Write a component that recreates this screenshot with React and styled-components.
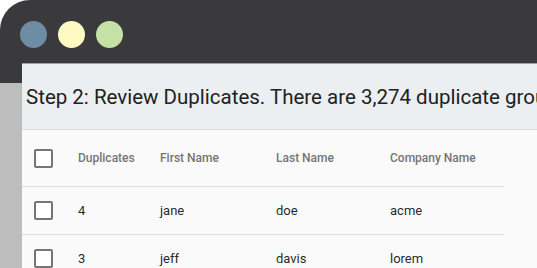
import React from "react";
import styled, { createGlobalStyle } from "styled-components";

const Global = createGlobalStyle`
  html, body { margin: 0; padding: 0; background: #ffffff; overflow: hidden; }
  body { font-family: Roboto, "Liberation Sans", Arial, sans-serif; }
`;

const Window = styled.div`
  width: 620px;
  height: 268px;
  background: #3a3a3c;
  border-top-left-radius: 30px;
  display: flex;
  flex-direction: column;
  overflow: hidden;
`;

const TitleBar = styled.div`
  height: 63px;
  flex: none;
  box-sizing: border-box;
  padding: 21px 0 0 20px;
  display: flex;
  gap: 11px;
`;

const Light = styled.span`
  width: 27px;
  height: 27px;
  border-radius: 50%;
  background: ${(p) => p.$color};
`;

const Body = styled.div`
  flex: 1;
  display: flex;
  min-height: 0;
`;

const Sidebar = styled.div`
  width: 22px;
  flex: none;
  box-sizing: border-box;
  background: #bdbdbd;
  border-top: 20px solid #3a3a3c;
`;

const Panel = styled.div`
  flex: 1;
  background: #fafafa;
  border-top: 1px solid #9e9e9e;
  display: flex;
  flex-direction: column;
  min-width: 0;
`;

const Header = styled.div`
  height: 65px;
  flex: none;
  background: #eceff1;
  border-bottom: 1px solid #dcdcdc;
  display: flex;
  align-items: center;
  padding-left: 4px;
  white-space: nowrap;
  overflow: hidden;
  font-size: 20.5px;
  color: #212121;
`;

const Table = styled.div`
  width: 482px;
  display: grid;
  grid-template-columns: 56px 82px 116px 114px 1fr;
`;

const Cell = styled.div`
  height: ${(p) => (p.$head ? "56px" : "47px")};
  border-bottom: 1px solid #e0e0e0;
  display: flex;
  align-items: center;
  padding-left: ${(p) => (p.$check ? "12px" : "0")};
  font-size: ${(p) => (p.$head ? "12px" : "13px")};
  font-weight: ${(p) => (p.$head ? 500 : 400)};
  color: ${(p) => (p.$head ? "#757575" : "rgba(0,0,0,0.87)")};
  white-space: nowrap;
`;

const Checkbox = styled.span`
  width: 19px;
  height: 19px;
  box-sizing: border-box;
  border: 2px solid #757575;
  border-radius: 2px;
  background: #fff;
`;

const columns = ["Duplicates", "First Name", "Last Name", "Company Name"];
const rows = [
  ["4", "jane", "doe", "acme"],
  ["3", "jeff", "davis", "lorem"],
];

export default function App() {
  return (
    <>
      <Global />
      <Window>
        <TitleBar>
          <Light $color="#6e8ca4" />
          <Light $color="#fff9c4" />
          <Light $color="#c5e1a5" />
        </TitleBar>
        <Body>
          <Sidebar />
          <Panel>
            <Header>
              Step 2: Review Duplicates. There are 3,274 duplicate groups to review.
            </Header>
            <Table>
              <Cell $head $check>
                <Checkbox />
              </Cell>
              {columns.map((c) => (
                <Cell $head key={c}>
                  {c}
                </Cell>
              ))}
              {rows.map((r, i) => (
                <React.Fragment key={i}>
                  <Cell $check>
                    <Checkbox />
                  </Cell>
                  {r.map((v, j) => (
                    <Cell key={j}>{v}</Cell>
                  ))}
                </React.Fragment>
              ))}
            </Table>
          </Panel>
        </Body>
      </Window>
    </>
  );
}
